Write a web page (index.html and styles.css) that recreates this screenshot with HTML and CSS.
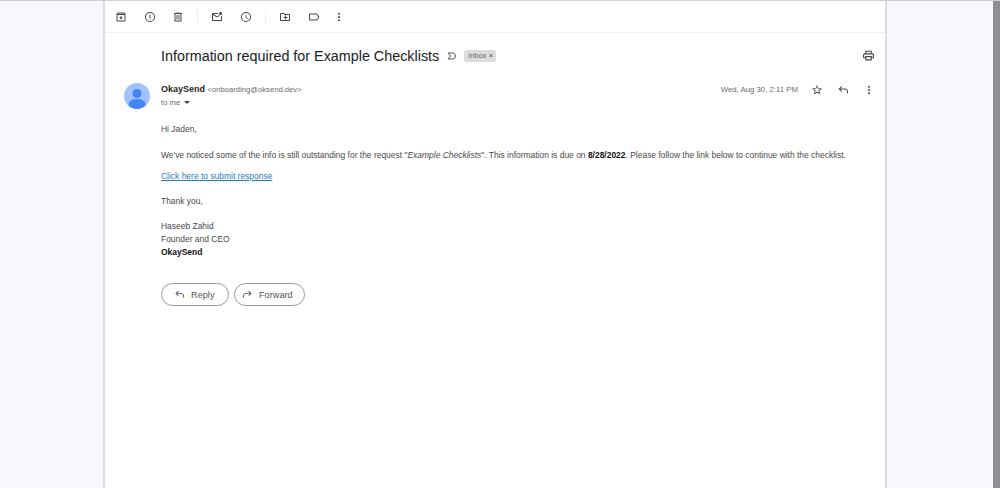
FILE: index.html
```html
<!DOCTYPE html>
<html lang="en">
<head>
  <meta charset="UTF-8">
  <title>Information required for Example Checklists</title>
  <link rel="stylesheet" href="styles.css">
</head>
<body>

<div class="app">
  <div class="gutter-left"></div>

  <main class="sheet">
    <!-- Toolbar -->
    <div class="toolbar">
      <svg class="tool" viewBox="0 0 24 24"><path d="M20.5 5.2 19.1 3.5C18.9 3.2 18.500 3 18 3H6c-.5 0-.9.2-1.200.5L3.500 5.200C3.200 5.600 3 6 3 6.500V19c0 1.100.9 2 2 2h14c1.100 0 2-.9 2-2V6.500c0-.5-.2-.9-.5-1.300zM6.200 5h11.600l.8 1H5.400l.8-1zM5 19V8h14v11H5zm8-9h-2v3H8l4 4 4-4h-3v-3z"/></svg>
      <svg class="tool tool-gap" viewBox="0 0 24 24"><path d="M12 2a10 10 0 1 0 0 20 10 10 0 0 0 0-20zm0 18a8 8 0 1 1 0-16 8 8 0 0 1 0 16zM11 7h2v7h-2zm0 8h2v2h-2z"/></svg>
      <svg class="tool tool-trash" viewBox="0 0 24 24"><path d="M15 4V3H9v1H4v2h1v13c0 1.100.9 2 2 2h10c1.100 0 2-.9 2-2V6h1V4h-5zm2 15H7V6h10v13zM9 8h2v9H9zm4 0h2v9h-2z"/></svg>
      <span class="sep"></span>
      <svg class="tool" viewBox="0 0 24 24"><path d="M19 8a3 3 0 1 0 0-6 3 3 0 0 0 0 6zM4 4c-1.100 0-2 .9-2 2v12c0 1.100.9 2 2 2h16c1.100 0 2-.9 2-2V10h-2v8H4V8l8 5 5.500-3.400-1.600-1.400L12 11 5 6h9V4H4z"/></svg>
      <svg class="tool tool-gap" viewBox="0 0 24 24"><path d="M12 2a10 10 0 1 0 0 20 10 10 0 0 0 0-20zm0 18a8 8 0 1 1 0-16 8 8 0 0 1 0 16zm.5-13H11v6l5.200 3.200.8-1.300-4.500-2.700V7z"/></svg>
      <span class="sep"></span>
      <svg class="tool" viewBox="0 0 24 24"><path d="M20 6h-8l-2-2H4c-1.100 0-2 .9-2 2v12c0 1.100.9 2 2 2h16c1.100 0 2-.9 2-2V8c0-1.100-.9-2-2-2zm0 12H4V6h5.200l2 2H20v10zm-8-1h2v-3h3v-2h-3V9h-2v3H9v2h3v3z"/></svg>
      <svg class="tool tool-gap" viewBox="0 0 24 24"><path d="M17 5H4c-1.100 0-2 .9-2 2v10c0 1.100.9 2 2 2h13c.7 0 1.300-.3 1.600-.8L23 12l-4.400-6.200C18.300 5.300 17.700 5 17 5zm0 12H4V7h13l3.500 5-3.500 5z"/></svg>
      <svg class="tool tool-more" viewBox="0 0 24 24"><circle cx="12" cy="5.500" r="2"/><circle cx="12" cy="12" r="2"/><circle cx="12" cy="18.500" r="2"/></svg>
    </div>

    <!-- Subject -->
    <div class="subject">
      <h1 class="subject-text">Information required for Example Checklists</h1>
      <svg class="important" viewBox="0 0 24 24"><path d="M3 5h12c.6 0 1.100.3 1.500.8L21 12l-4.500 6.200c-.4.500-.9.8-1.500.8H3l4.500-7L3 5zm3.600 2 3.300 5-3.300 5H15l3.600-5L15 7H6.600z"/></svg>
      <span class="label">Inbox <span class="label-x">×</span></span>
      <svg class="print" viewBox="0 0 24 24"><path d="M19 8h-1V3H6v5H5c-1.700 0-3 1.300-3 3v6h4v4h12v-4h4v-6c0-1.700-1.300-3-3-3zM8 5h8v3H8V5zm8 14H8v-4h8v4zm4-4h-2v-2H6v2H4v-4c0-.6.4-1 1-1h14c.6 0 1 .4 1 1v4z"/></svg>
    </div>

    <!-- Message -->
    <div class="message">
      <svg class="avatar" viewBox="0 0 26 26">
        <circle cx="13" cy="13" r="13" fill="#a0c3ff"/>
        <circle cx="13" cy="10.500" r="4.500" fill="#4285f4"/>
        <ellipse cx="13" cy="21" rx="8.500" ry="5" fill="#4285f4"/>
      </svg>
      <div class="message-main">
        <div class="message-head">
          <div class="sender">
            <div><span class="sender-name">OkaySend</span> <span class="sender-mail">&lt;onboarding@oksend.dev&gt;</span></div>
            <div class="to-me">to me <span class="caret"></span></div>
          </div>
          <span class="date">Wed, Aug 30, 2:11 PM</span>
          <svg class="head-icon star" viewBox="0 0 24 24"><path d="M22 9.200l-7.200-.6L12 2 9.200 8.600 2 9.200l5.500 4.700L5.800 21l6.200-3.700 6.200 3.700-1.600-7.100L22 9.200zM12 15l-3.800 2.300 1-4.300-3.300-2.900 4.400-.4L12 5.700l1.700 4 4.400.4-3.300 2.900 1 4.300L12 15z"/></svg>
          <svg class="head-icon reply" viewBox="0 0 24 24"><path d="M20 19v-4c0-2.200-1.800-4-4-4H6.800l3.600 3.600L9 16l-6-6 6-6 1.400 1.400L6.800 9H16c3.300 0 6 2.700 6 6v4h-2z"/></svg>
          <svg class="head-icon more" viewBox="0 0 24 24"><circle cx="12" cy="5.500" r="2"/><circle cx="12" cy="12" r="2"/><circle cx="12" cy="18.500" r="2"/></svg>
        </div>

        <div class="body-text">
          <p class="greet">Hi Jaden,</p>
          <p class="para">We've noticed some of the info is still outstanding for the request "<em>Example Checklists</em>". This information is due on <strong>8/28/2022</strong>. Please follow the link below to continue with the checklist.</p>
          <p class="link-row"><a href="#" class="link">Click here to submit response</a></p>
          <p class="thanks">Thank you,</p>
          <p class="sign">Haseeb Zahid<br>Founder and CEO<br><strong>OkaySend</strong></p>
        </div>

        <div class="actions">
          <a href="#" class="pill pill-reply">
            <svg class="pill-icon" viewBox="0 0 24 24"><path d="M20 19v-4c0-2.200-1.800-4-4-4H6.800l3.600 3.600L9 16l-6-6 6-6 1.400 1.400L6.800 9H16c3.300 0 6 2.700 6 6v4h-2z"/></svg>
            Reply
          </a>
          <a href="#" class="pill pill-forward">
            <svg class="pill-icon" viewBox="0 0 24 24"><path d="M4 19v-4c0-2.200 1.800-4 4-4h9.200l-3.600 3.600L15 16l6-6-6-6-1.400 1.400L17.200 9H8c-3.300 0-6 2.700-6 6v4h2z"/></svg>
            Forward
          </a>
        </div>
      </div>
    </div>
  </main>

  <div class="gutter-right"></div>
  <div class="scrollbar"></div>
</div>

</body>
</html>
```

FILE: styles.css
```css
* {
  margin: 0;
  padding: 0;
  box-sizing: border-box;
}
html, body {
  height: 100%;
  overflow: hidden;
}
body {
  font-family: 'Liberation Sans', Arial, sans-serif;
  background: #f6f8fc;
  color: #4a4a4a;
  font-size: 8.46px;
}
.app {
  display: flex;
  height: 488px;
  border-top: 1px solid #cfcfcf;
}
.gutter-left {
  width: 103px;
}
.gutter-right {
  flex: 1;
}
.scrollbar {
  width: 7px;
  background: #8f8e93;
}
.sheet {
  width: 784px;
  background: #fff;
  border-left: 2px solid #dcdde0;
  border-right: 2px solid #dcdde0;
}

/* Toolbar */
.toolbar {
  display: flex;
  align-items: center;
  height: 32px;
  padding: 1px 0 0 10px;
  border-bottom: 1px solid #f0f0f0;
}
.tool {
  width: 12px;
  height: 12px;
  fill: #444746;
  flex: none;
}
.tool-gap {
  margin-left: 17px;
}
.tool-trash {
  margin-left: 16px;
}
.tool-more {
  margin-left: 13px;
}
.sep {
  width: 1px;
  height: 14px;
  background: #eeeeee;
  margin: 0 13px;
}

/* Subject line */
.subject {
  display: flex;
  align-items: center;
  height: 45px;
  padding: 0 10px 0 56px;
}
.subject-text {
  font-size: 14.35px;
  font-weight: normal;
  color: #202124;
}
.important {
  width: 12px;
  height: 12px;
  margin-left: 7px;
  fill: #5f5f5f;
}
.label {
  margin-left: 6px;
  padding: 0 3px 0 4px;
  height: 12px;
  background: #dddddd;
  color: #666;
  border-radius: 2px;
  font-size: 7.5px;
  line-height: 12px;
}
.label-x {
  color: #444;
}
.print {
  width: 13px;
  height: 13px;
  margin-left: auto;
  fill: #444746;
}

/* Message */
.message {
  display: flex;
  padding: 5px 10px 0 19px;
}
.avatar {
  width: 26px;
  height: 26px;
  flex: none;
  margin-right: 11px;
}
.message-main {
  flex: 1;
  min-width: 0;
}
.message-head {
  display: flex;
  align-items: flex-start;
}
.sender {
  flex: 1;
  line-height: 13px;
  font-size: 9px;
}
.sender-name {
  font-weight: bold;
  color: #1f1f1f;
}
.sender-mail {
  font-size: 7.65px;
  color: #6a6a6a;
}
.to-me {
  font-size: 7.7px;
  color: #6a6a6a;
}
.caret {
  display: inline-block;
  width: 0;
  height: 0;
  margin-left: 2px;
  vertical-align: middle;
  border-left: 3px solid transparent;
  border-right: 3px solid transparent;
  border-top: 3px solid #444;
}
.date {
  font-size: 7.8px;
  color: #6a6a6a;
  line-height: 13px;
}
.head-icon {
  width: 12px;
  height: 12px;
  fill: #444746;
  flex: none;
  margin-top: 1px;
}
.star {
  margin-left: 13px;
}
.reply {
  margin-left: 14px;
}
.more {
  margin-left: 14px;
}

/* Body */
.body-text {
  margin-top: 14px;
  line-height: 13px;
}
.para {
  margin-top: 13px;
  white-space: nowrap;
}
.para strong, .sign strong {
  color: #111;
}
.link-row {
  margin-top: 8px;
}
.link {
  color: #2a7ab8;
}
.thanks {
  margin-top: 12px;
}
.sign {
  margin-top: 12px;
}

/* Reply / Forward */
.actions {
  display: flex;
  gap: 5px;
  margin-top: 24px;
}
.pill {
  display: flex;
  align-items: center;
  height: 23px;
  border: 1px solid #999;
  border-radius: 12px;
  color: #555;
  text-decoration: none;
  font-size: 9.2px;
  padding-left: 12px;
}
.pill-reply {
  width: 68px;
}
.pill-forward {
  width: 71px;
  padding-left: 7px;
}
.pill-icon {
  width: 11px;
  height: 11px;
  fill: #555;
  margin-right: 6px;
}
```
